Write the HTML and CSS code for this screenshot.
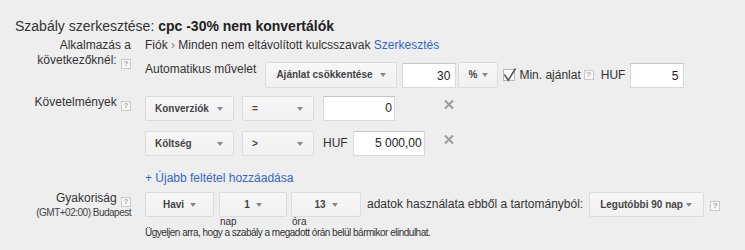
FILE: index.html
```html
<!DOCTYPE html>
<html lang="hu">
<head>
<meta charset="utf-8">
<title>Szabály szerkesztése</title>
<link rel="stylesheet" href="styles.css">
</head>
<body>
<h1 class="title">Szabály szerkesztése: <b>cpc -30% nem konvertálók</b></h1>

<div class="row row-apply">
  <div class="label">Alkalmazás a<br>következőknél: <span class="help">?</span></div>
  <div class="field">
    <div class="path">Fiók <span class="sep">›</span> Minden nem eltávolított kulcsszavak <a class="link" href="#">Szerkesztés</a></div>
    <div class="action">
      <span class="lead">Automatikus művelet</span>
      <div class="sel h26 w-ajanlat"><span>Ajánlat csökkentése</span><i class="caret"></i></div>
      <div class="inp h26 w-30">30</div>
      <div class="sel h26 w-pct"><span>%</span><i class="caret"></i></div>
      <span class="check"><svg width="14" height="16" viewBox="0 0 14 16"><path d="M1.3 7.5 L5.3 13.3 L12.5 1.5" fill="none" stroke="#555" stroke-width="1.5"/></svg></span>
      <span class="minlabel">Min. ajánlat</span><span class="help help-mid">?</span>
      <span class="huf">HUF</span>
      <div class="inp h26 w-min">5</div>
    </div>
  </div>
</div>

<div class="row row-crit">
  <div class="label">Követelmények <span class="help">?</span></div>
  <div class="field crit">
    <div class="crow">
      <div class="sel w-c1"><span>Konverziók</span><i class="caret"></i></div>
      <div class="sel w-c2"><span>=</span><i class="caret"></i></div>
      <div class="val"><div class="inp tight w-val">0</div></div>
      <span class="remove"><svg width="10" height="9" viewBox="0 0 10 9"><path d="M1 0.5 L9 8.5 M9 0.5 L1 8.5" stroke="#9a9a9a" stroke-width="2"/></svg></span>
    </div>
    <div class="crow">
      <div class="sel w-c1"><span>Költség</span><i class="caret"></i></div>
      <div class="sel w-c2"><span>&gt;</span><i class="caret"></i></div>
      <div class="val"><span class="huf2">HUF</span><div class="inp tight w-val">5 000,00</div></div>
      <span class="remove"><svg width="10" height="9" viewBox="0 0 10 9"><path d="M1 0.5 L9 8.5 M9 0.5 L1 8.5" stroke="#9a9a9a" stroke-width="2"/></svg></span>
    </div>
    <a class="link add" href="#">+ Újabb feltétel hozzáadása</a>
  </div>
</div>

<div class="row row-freq">
  <div class="label">Gyakoriság <span class="help">?</span>
    <div class="tz">(GMT+02:00) Budapest</div>
  </div>
  <div class="field freq-field">
    <div class="freq">
      <div class="cell"><div class="sel center w-havi"><span>Havi</span><i class="caret"></i></div></div>
      <div class="cell"><div class="sel center w-nap"><span>1</span><i class="caret"></i></div><div class="cap">nap</div></div>
      <div class="cell"><div class="sel center w-ora"><span>13</span><i class="caret"></i></div><div class="cap">óra</div></div>
      <span class="ftext">adatok használata ebből a tartományból:</span>
      <div class="sel w-range"><span>Legutóbbi 90 nap</span><i class="caret"></i></div>
      <span class="help help-freq">?</span>
    </div>
    <div class="note">Ügyeljen arra, hogy a szabály a megadott órán belül bármikor elindulhat.</div>
  </div>
</div>
</body>
</html>
```
FILE: styles.css
```css
body {
  margin: 0;
  background: #eeeeee;
  font-family: Arial, "Liberation Sans", sans-serif;
  font-size: 12px;
  line-height: 15px;
  color: #222;
}

.title {
  margin: 0 0 4px 0;
  padding: 18px 0 0 15px;
  font-size: 14px;
  line-height: 16px;
  font-weight: normal;
  color: #333;
}
.title b { color: #222; }

.row {
  display: grid;
  grid-template-columns: 131px 1fr;
  column-gap: 14px;
  align-items: start;
}
.row-crit { margin-top: 7px; }
.row-freq { margin-top: 5px; }

.label {
  text-align: right;
  color: #333;
}

.help {
  display: inline-block;
  box-sizing: border-box;
  width: 10px;
  height: 10px;
  border: 1px solid #c9c9c9;
  background: #f7f7f7;
  color: #a8a8a8;
  font-size: 8px;
  line-height: 8px;
  font-weight: bold;
  text-align: center;
  vertical-align: -2px;
  margin-left: 1px;
}

.link { color: #3366cc; text-decoration: none; }

.path { color: #333; }
.sep { color: #888; }

.action {
  display: flex;
  align-items: center;
  height: 26px;
  margin-top: 9px;
}
.lead {
  align-self: flex-start;
  margin-right: 9px;
  color: #333;
}

.sel {
  display: flex;
  align-items: center;
  justify-content: space-between;
  box-sizing: border-box;
  height: 25px;
  padding: 0 10px 0 9px;
  border: 1px solid #dcdcdc;
  border-radius: 2px;
  background: linear-gradient(#f7f7f7, #f1f1f1);
  font-size: 10px;
  font-weight: bold;
  color: #444;
  line-height: 12px;
  white-space: nowrap;
  flex: none;
}
.sel.center { justify-content: center; padding: 0; }
.sel.center .caret { margin-left: 6px; }
.caret {
  display: block;
  flex: none;
  width: 0;
  height: 0;
  border-top: 4px solid #8a8a8a;
  border-left: 3.5px solid transparent;
  border-right: 3.5px solid transparent;
  margin-left: 5px;
}
.h26 { height: 26px; }

.inp {
  box-sizing: border-box;
  height: 25px;
  border: 1px solid #d9d9d9;
  border-top-color: #c6c6c6;
  background: #fff;
  font-size: 12px;
  line-height: 23px;
  text-align: right;
  padding-right: 5px;
  color: #222;
  flex: none;
}
.inp.h26 { line-height: 24px; }
.inp.tight { padding-right: 2px; }

.w-ajanlat { width: 132px; padding-left: 10px; margin-right: 5px; }
.w-30 { width: 54px; margin-right: 2px; }
.w-pct { width: 40px; margin-right: 5px; }
.w-min { width: 54px; margin-left: 5px; }

.check {
  position: relative;
  box-sizing: border-box;
  width: 12px;
  height: 12px;
  border: 1px solid #b8b8b8;
  background: #fcfcfc;
  margin-right: 4px;
  flex: none;
}
.check svg {
  position: absolute;
  left: -1px;
  top: -3px;
  overflow: visible;
}
.minlabel { color: #333; }
.help-mid { margin-left: 3px; vertical-align: 0; }
.huf { margin-left: 7px; color: #333; }

.crit { padding-top: 1px; }
.crow {
  display: flex;
  align-items: center;
  height: 25px;
}
.crow + .crow { margin-top: 10px; }
.w-c1 { width: 89px; margin-right: 8px; }
.w-c2 { width: 72px; margin-right: 9px; }
.val {
  display: flex;
  align-items: center;
  width: 112px;
  margin-right: 9px;
  flex: none;
}
.w-val { width: 72px; }
.huf2 { margin-right: 5px; color: #333; }
.remove {
  align-self: flex-start;
  margin-top: 4px;
  width: 10px;
  height: 9px;
  display: block;
}
.remove svg { display: block; }

.add {
  display: block;
  margin-top: 15px;
}

.tz {
  font-size: 10px;
  line-height: 9px;
  letter-spacing: -0.5px;
  color: #444;
  margin-top: 1px;
}

.freq-field { padding-top: 1px; }
.freq {
  display: flex;
  align-items: flex-start;
}
.cell { display: flex; flex-direction: column; flex: none; }
.w-havi { width: 69px; margin-right: 5px; }
.w-nap { width: 68px; margin-right: 4px; }
.w-ora { width: 70px; margin-right: 6px; }
.cap {
  font-size: 10px;
  line-height: 9px;
  margin-top: 0;
  padding-left: 1px;
  color: #333;
}
.ftext {
  line-height: 25px;
  height: 25px;
  margin-right: 6px;
  color: #333;
  white-space: nowrap;
}
.w-range { width: 115px; padding-left: 10px; padding-right: 12px; }
.w-range .caret { margin-left: 3px; }
.help-freq { margin-left: 6px; margin-top: 9px; }

.note {
  margin-top: 2px;
  font-size: 10px;
  line-height: 10px;
  letter-spacing: -0.5px;
  color: #333;
}
```
